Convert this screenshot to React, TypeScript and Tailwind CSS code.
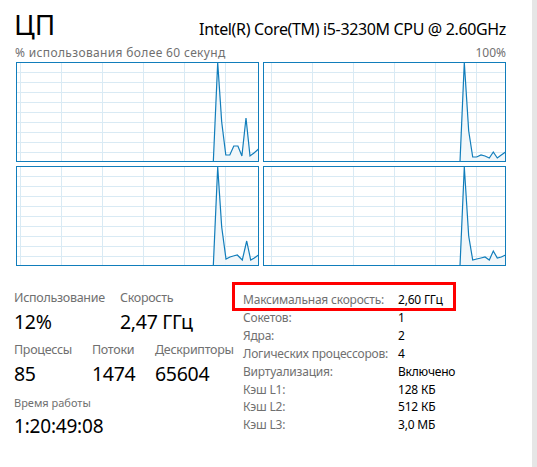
type Pt = [number, number];

const charts: { pts: Pt[]; offset: number }[] = [
  {
    offset: 4.5,
    pts: [[197.3, 100], [201.7, 0.5], [205.7, 60], [209.8, 93], [213.8, 93], [217.8, 84], [221.9, 84], [225.9, 94], [230, 56], [234, 94], [238, 91], [242.5, 87]],
  },
  {
    offset: 8.5,
    pts: [[197, 100], [201.3, 0.5], [205.7, 69], [209.7, 95], [213.7, 95], [218, 93], [222, 94], [226.3, 96], [230.3, 90], [234.3, 96], [238.3, 93], [242.5, 90]],
  },
  {
    offset: 4.5,
    pts: [[197.3, 100], [201.7, 1], [205.7, 61], [210, 93], [214, 91], [217.3, 90], [221.3, 89], [226.3, 94], [230.7, 75], [234.7, 94], [238.3, 92], [242.5, 89]],
  },
  {
    offset: 8.5,
    pts: [[197, 100], [201.3, 1], [205.7, 70], [209.7, 94], [213.7, 93], [218, 92], [222, 91], [226.3, 94], [230.3, 85], [234.3, 92], [238.3, 91], [242.5, 89]],
  },
];

const Chart = ({ pts, offset }: { pts: Pt[]; offset: number }) => {
  const w = 243;
  const h = 100;
  const line = pts.map((p) => p.join(",")).join(" ");
  const area = `${line} ${w},${h}`;
  return (
    <svg width={w} height={h} className="block">
      <rect x="0" y="0" width={w} height={h} fill="#ffffff" />
      {[1, 2, 3, 4, 5, 6, 7, 8, 9].map((i) => (
        <line key={"h" + i} x1="0" x2={w} y1={i * 10 + 0.5} y2={i * 10 + 0.5} stroke="#d9eaf4" strokeWidth="1" />
      ))}
      {[0, 1, 2, 3, 4, 5].map((i) => (
        <line key={"v" + i} x1={offset + i * 41} x2={offset + i * 41} y1="0" y2={h} stroke="#d9eaf4" strokeWidth="1" />
      ))}
      <polygon points={area} fill="#f1f6fa" fillOpacity="0.9" />
      <polyline points={line} fill="none" stroke="#117dbb" strokeWidth="1.2" strokeLinejoin="miter" />
      <rect x="0.5" y="0.5" width={w - 1} height={h - 1} fill="none" stroke="#117dbb" strokeWidth="1" />
    </svg>
  );
};

const details: [string, string][] = [
  ["Максимальная скорость:", "2,60 ГГц"],
  ["Сокетов:", "1"],
  ["Ядра:", "2"],
  ["Логических процессоров:", "4"],
  ["Виртуализация:", "Включено"],
  ["Кэш L1:", "128 КБ"],
  ["Кэш L2:", "512 КБ"],
  ["Кэш L3:", "3,0 МБ"],
];

const Stat = ({ label, value, w }: { label: string; value: string; w: string }) => (
  <div className={w}>
    <div className="text-[12.5px] leading-[18px] tracking-[-0.3px] text-[#707070]">{label}</div>
    <div className="text-[19.5px] leading-[26px] mt-[2px] tracking-[-0.3px] text-black">{value}</div>
  </div>
);

export default function App() {
  return (
    <div className="w-[537px] h-[467px] bg-white flex overflow-hidden font-['Noto_Sans',sans-serif]">
      <div className="flex-1 pl-[14px] pt-[6px]">
        <div className="flex items-baseline justify-between w-[492px]">
          <span className="text-[28px] leading-[36px] text-black">ЦП</span>
          <span className="text-[16px] tracking-[-0.35px] text-black">Intel(R) Core(TM) i5-3230M CPU @ 2.60GHz</span>
        </div>
        <div className="flex justify-between w-[492px] mt-[3px] text-[12px] leading-[16px] text-[#707070]">
          <span className="pl-[1px] tracking-[0.35px]">% использования более 60 секунд</span>
          <span>100%</span>
        </div>
        <div className="ml-[2px] mt-[1px] grid grid-cols-[243px_243px] gap-x-[4px] gap-y-[4px] w-[490px]">
          {charts.map((c, i) => (
            <Chart key={i} pts={c.pts} offset={c.offset} />
          ))}
        </div>

        <div className="flex mt-[23px]">
          <div className="w-[229px]">
            <div className="flex">
              <Stat w="w-[106px]" label="Использование" value="12%" />
              <Stat w="w-[120px]" label="Скорость" value="2,47 ГГц" />
            </div>
            <div className="flex mt-[6px]">
              <Stat w="w-[78px]" label="Процессы" value="85" />
              <Stat w="w-[63px]" label="Потоки" value="1474" />
              <Stat w="w-[80px]" label="Дескрипторы" value="65604" />
            </div>
            <div className="mt-[8px]">
              <div className="text-[11px] leading-[16px] text-[#707070]">Время работы</div>
              <div className="text-[19px] leading-[26px] mt-[2px] tracking-[-0.2px] text-black">1:20:49:08</div>
            </div>
          </div>

          <div className="pt-[2px]">
            {details.map(([k, v], i) => (
              <div key={k} className="relative grid grid-cols-[155px_auto] text-[12px] leading-[17.9px] tracking-[-0.2px]">
                <span className="text-[#707070]">{k}</span>
                <span className="text-black">{v}</span>
                {i === 0 && (
                  <div className="absolute left-[-11px] top-[-9px] w-[224px] h-[29px] border-[3px] border-[#ff0000]" />
                )}
              </div>
            ))}
          </div>
        </div>
      </div>
      <div className="w-[5px] h-full bg-[#e6e6e6]" />
    </div>
  );
}
